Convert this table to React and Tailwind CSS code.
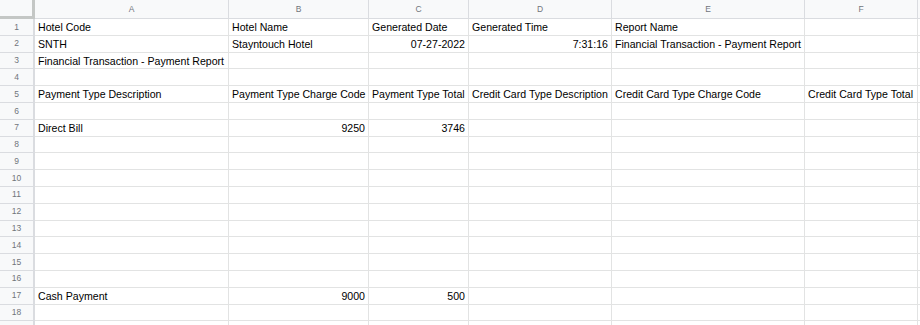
import React from "react";

const COLS = [
  { key: "A", w: "w-[194px]" },
  { key: "B", w: "w-[140px]" },
  { key: "C", w: "w-[100px]" },
  { key: "D", w: "w-[143px]" },
  { key: "E", w: "w-[193px]" },
  { key: "F", w: "w-[113px]" },
];

// each row: array of [text, align] per column
const ROWS = {
  1: [["Hotel Code"], ["Hotel Name"], ["Generated Date"], ["Generated Time"], ["Report Name"]],
  2: [["SNTH"], ["Stayntouch Hotel"], ["07-27-2022", "r"], ["7:31:16", "r"], ["Financial Transaction - Payment Report"]],
  3: [["Financial Transaction - Payment Report"]],
  5: [
    ["Payment Type Description"],
    ["Payment Type Charge Code"],
    ["Payment Type Total"],
    ["Credit Card Type Description"],
    ["Credit Card Type Charge Code"],
    ["Credit Card Type Total"],
  ],
  7: [["Direct Bill"], ["9250", "r"], ["3746", "r"]],
  17: [["Cash Payment"], ["9000", "r"], ["500", "r"]],
};

const rowNumbers = Array.from({ length: 18 }, (_, i) => i + 1);

function HeaderRow() {
  return (
    <div className="flex h-[19px] shrink-0">
      <div className="w-[35px] shrink-0 bg-[#f8f9fa] border-r-[3px] border-b-[3px] border-[#c4c7c5]" />
      {COLS.map((c) => (
        <div
          key={c.key}
          className={`${c.w} shrink-0 flex items-center justify-center bg-[#f8f9fa] border-r border-b border-[#dadce0] text-[8.5px] text-[#70757a]`}
        >
          {c.key}
        </div>
      ))}
      <div className="flex-1 bg-[#f8f9fa] border-b border-[#dadce0]" />
    </div>
  );
}

function Row({ n, label = true }) {
  const data = ROWS[n] || [];
  return (
    <div className="flex h-[16.8px] shrink-0">
      <div className="w-[35px] shrink-0 flex items-center justify-center bg-[#f8f9fa] border-r-2 border-b border-[#dadce0] text-[8.5px] text-[#70757a]">
        {label ? n : ""}
      </div>
      {COLS.map((c, i) => {
        const cell = data[i];
        const right = cell && cell[1] === "r";
        return (
          <div
            key={c.key}
            className={`${c.w} shrink-0 flex items-center whitespace-nowrap overflow-hidden px-[3px] pt-[2px] border-r border-b border-[#e2e3e3] text-[10.6px] text-black ${
              right ? "justify-end" : "justify-start"
            }`}
          >
            {cell ? cell[0] : ""}
          </div>
        );
      })}
      <div className="flex-1 border-b border-[#e2e3e3]" />
    </div>
  );
}

export default function App() {
  return (
    <div
      className="w-[920px] h-[325px] overflow-hidden bg-white flex flex-col"
      style={{ fontFamily: '"Liberation Sans", Arial, sans-serif' }}
    >
      <HeaderRow />
      {rowNumbers.map((n) => (
        <Row key={n} n={n} />
      ))}
      {/* next row, only its top edge shows below row 18 */}
      <Row n={19} label={false} />
    </div>
  );
}
